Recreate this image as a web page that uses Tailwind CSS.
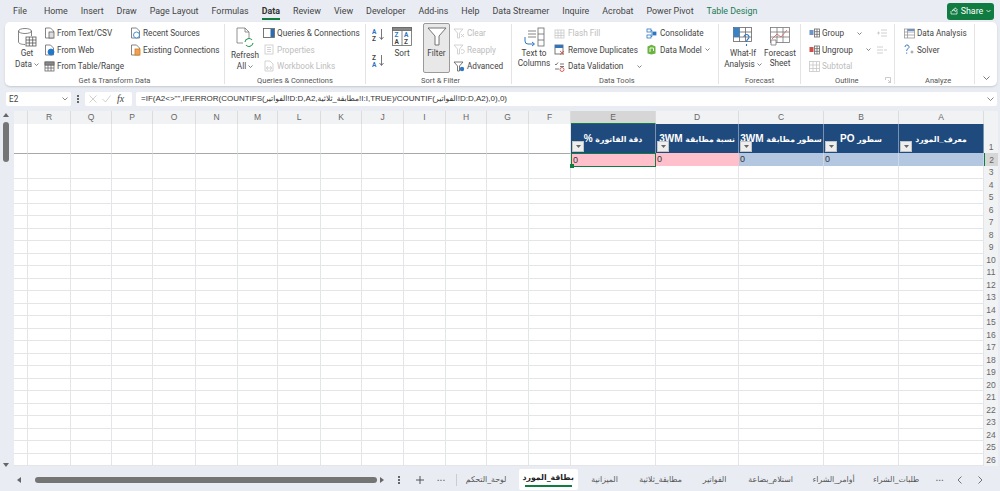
<!DOCTYPE html>
<html lang="en">
<head>
<meta charset="UTF-8">
<title>Excel - Data</title>
<script src="https://cdn.jsdelivr.net/npm/@tailwindcss/browser@4"></script>
</head>
<body class="w-[1000px] h-[491px] overflow-hidden bg-[#e9edf3] font-['Roboto','DejaVu_Sans',sans-serif] text-[#444] text-[8.2px] leading-none whitespace-nowrap">

<!-- menu tabs -->
<div class="h-[22px] flex items-center pl-[13px] pr-[6px] text-[8.900px] text-[#444]">
  <div class="flex gap-[13px] items-center">
    <span class="mr-[4px]">File</span><span>Home</span><span>Insert</span><span>Draw</span><span>Page Layout</span><span>Formulas</span>
    <span class="relative font-bold text-[#333]">Data<span class="absolute left-0 right-0 top-[11px] h-[2px] bg-[#107c41]"></span></span>
    <span>Review</span><span>View</span><span>Developer</span><span>Add-ins</span><span>Help</span><span>Data Streamer</span><span>Inquire</span><span>Acrobat</span><span>Power Pivot</span><span class="text-[#1d7a55]">Table Design</span>
  </div>
  <div class="ml-auto h-[17px] w-[47px] bg-[#107c41] rounded-[3px] text-white flex items-center justify-center gap-[3px]">
    <svg width="8" height="8" viewBox="0 0 8 8" fill="none" stroke="#fff" stroke-width=".7"><path d="M1 4v3h6V4M2 4a3 3 0 0 1 3-2V.8L7.5 2.8 5 4.6V3.4A3 3 0 0 0 2 4z"/></svg>
    <span>Share</span>
    <svg width="5" height="4" viewBox="0 0 5 4" fill="none" stroke="#fff" stroke-width=".8"><path d="M.5 1l2 2 2-2"/></svg>
  </div>
</div>

<!-- ribbon -->
<div class="mx-[3px] ml-[5px] h-[64px] bg-white rounded-[5px] shadow-[0_1px_2px_rgba(0,0,0,.15)] flex">

  <!-- Get & Transform -->
  <div class="w-[220px] flex flex-col border-r border-[#e4e4e4] my-[2px]">
    <div class="flex-1 flex">
      <div class="w-[28px] ml-[8px] mr-[3px] flex flex-col items-center">
        <svg width="20" height="21" viewBox="0 0 20 21" class="mt-[3px]" fill="none" stroke="#666" stroke-width=".8"><ellipse cx="8" cy="4" rx="6.5" ry="2.5" fill="#fff"/><path d="M1.5 4v11c0 1.4 2.8 2.5 6.5 2.5" /><path d="M14.500 4v5"/><rect x="9" y="10" width="10" height="9" fill="#fff" stroke="#555"/><path d="M9 13h10M9 16h10M12.300 10v9M15.700 10v9" stroke="#555"/></svg>
        <span class="mt-[1px] h-[10px]">Get</span>
        <span class="flex items-center gap-[2px] h-[10px]">Data <svg width="5" height="3" viewBox="0 0 5 3" fill="none" stroke="#555" stroke-width=".7"><path d="M.5.500l2 2 2-2"/></svg></span>
      </div>
      <div class="w-[86px] flex flex-col pt-[1px]">
        <div class="h-[16.500px] flex items-center gap-[2px]"><svg width="11" height="12" viewBox="0 0 11 12" fill="none" stroke="#666" stroke-width=".8"><path d="M1.500 1h5l3 3v7h-8z"/><rect x="5" y="5" width="5" height="6" fill="#ddd"/></svg>From Text/CSV</div>
        <div class="h-[16.500px] flex items-center gap-[2px]"><svg width="11" height="12" viewBox="0 0 11 12" fill="none" stroke="#666" stroke-width=".8"><path d="M1.500 1h5l3 3v7h-8z"/><circle cx="7" cy="8" r="3" fill="#1f78c8" stroke="#1f78c8"/></svg>From Web</div>
        <div class="h-[16.500px] flex items-center gap-[2px]"><svg width="11" height="11" viewBox="0 0 11 11" fill="none" stroke="#666" stroke-width=".8"><rect x="1" y="1" width="9" height="9"/><path d="M1 4h9M1 7h9M4 1v9M7 1v9"/><rect x="1" y="1" width="9" height="3" fill="#888"/></svg>From Table/Range</div>
      </div>
      <div class="flex flex-col pt-[1px]">
        <div class="h-[16.500px] flex items-center gap-[2px]"><svg width="11" height="12" viewBox="0 0 11 12" fill="none" stroke="#666" stroke-width=".8"><path d="M1.500 1h5l3 3v7h-8z"/><circle cx="6.500" cy="8" r="3" fill="#fff" stroke="#1f78c8"/></svg>Recent Sources</div>
        <div class="h-[16.500px] flex items-center gap-[2px]"><svg width="11" height="12" viewBox="0 0 11 12" fill="none" stroke="#666" stroke-width=".8"><path d="M1.500 1h5l3 3v7h-8z"/><rect x="5" y="5" width="5" height="6" fill="#f0a050" stroke="#d07a20"/></svg>Existing Connections</div>
      </div>
    </div>
    <div class="h-[7px] text-center text-[7.500px] text-[#555]">Get &amp; Transform Data</div>
  </div>

  <!-- Queries -->
  <div class="w-[141px] flex flex-col border-r border-[#e4e4e4] my-[2px]">
    <div class="flex-1 flex">
      <div class="w-[32px] ml-[4px] flex flex-col items-center">
        <svg width="20" height="21" viewBox="0 0 20 21" class="mt-[3px]" fill="none" stroke="#777" stroke-width=".8"><path d="M2 1h8l4 4v7M2 1v15h6"/><path d="M10 1v4h4"/><path d="M10 15a4 4 0 0 1 7-2M18 16a4 4 0 0 1-7 2" stroke="#2d9a5a" stroke-width="1.100"/></svg>
        <span class="mt-[3px] h-[10px]">Refresh</span>
        <span class="flex items-center gap-[2px] h-[10px]">All <svg width="5" height="3" viewBox="0 0 5 3" fill="none" stroke="#555" stroke-width=".7"><path d="M.5.500l2 2 2-2"/></svg></span>
      </div>
      <div class="ml-[2px] flex flex-col pt-[1px]">
        <div class="h-[16.500px] flex items-center gap-[2px]"><svg width="12" height="10" viewBox="0 0 12 10" fill="none" stroke="#555" stroke-width=".8"><rect x=".5" y=".5" width="11" height="9"/><rect x="7.500" y="1" width="3.500" height="8" fill="#2b6cb0" stroke="none"/></svg>Queries &amp; Connections</div>
        <div class="h-[16.500px] flex items-center gap-[2px] text-[#bdbdbd]"><svg width="12" height="11" viewBox="0 0 12 11" fill="none" stroke="#c8c8c8" stroke-width=".8"><rect x="2" y="1" width="8" height="9"/><path d="M4 3.500h4M4 5.500h4M4 7.500h4"/></svg>Properties</div>
        <div class="h-[16.500px] flex items-center gap-[2px] text-[#bdbdbd]"><svg width="12" height="12" viewBox="0 0 12 12" fill="none" stroke="#c8c8c8" stroke-width=".8"><path d="M2 1h5l3 3v7H2z"/><path d="M4 8h4M5 6.500a1.500 1.500 0 0 0 0 3M7 6.500a1.500 1.500 0 0 1 0 3"/></svg>Workbook Links</div>
      </div>
    </div>
    <div class="h-[7px] text-center text-[7.500px] text-[#555]">Queries &amp; Connections</div>
  </div>

  <!-- Sort & Filter -->
  <div class="w-[146px] flex flex-col border-r border-[#e4e4e4] my-[2px]">
    <div class="flex-1 flex">
      <div class="ml-[6px] w-[14px] flex flex-col gap-[13px] pt-[4px]">
        <svg width="13" height="13" viewBox="0 0 13 13"><text x="0" y="6" font-size="6.500" font-weight="700" fill="#2f76c0">A</text><text x="0" y="12.500" font-size="6.500" font-weight="700" fill="#444">Z</text><path d="M9.500 1v10M7.500 9l2 2.500 2-2.500" fill="none" stroke="#555" stroke-width=".8"/></svg>
        <svg width="13" height="13" viewBox="0 0 13 13"><text x="0" y="6" font-size="6.500" font-weight="700" fill="#444">Z</text><text x="0" y="12.500" font-size="6.500" font-weight="700" fill="#2f76c0">A</text><path d="M9.500 1v10M7.500 9l2 2.500 2-2.500" fill="none" stroke="#555" stroke-width=".8"/></svg>
      </div>
      <div class="w-[20px] ml-[6px] flex flex-col items-center">
        <svg width="20" height="19" viewBox="0 0 20 19" class="mt-[3px]" fill="none" stroke="#666" stroke-width=".8"><rect x=".5" y=".5" width="19" height="18"/><rect x=".5" y=".5" width="19" height="3" fill="#888"/><path d="M10 3.500v15"/><text x="2.500" y="10" font-size="6.500" fill="#2f76c0" stroke="none" font-weight="700">Z</text><text x="2.500" y="17" font-size="6.500" fill="#444" stroke="none" font-weight="700">A</text><text x="12" y="10" font-size="6.500" fill="#2f76c0" stroke="none" font-weight="700">A</text><text x="12" y="17" font-size="6.500" fill="#444" stroke="none" font-weight="700">Z</text></svg>
        <span class="mt-[3px]">Sort</span>
      </div>
      <div class="ml-[11px] -mt-[1px] w-[27px] h-[50px] bg-[#e8e8e8] border border-[#9a9a9a] rounded-[2px] flex flex-col items-center">
        <svg width="20" height="19" viewBox="0 0 20 19" class="mt-[3px]" fill="#fff" stroke="#666" stroke-width=".9"><path d="M1 1h18l-7 8v9h-4V9z"/></svg>
        <span class="mt-[3px]">Filter</span>
      </div>
      <div class="ml-[3px] flex flex-col pt-[1px]">
        <div class="h-[16.500px] flex items-center gap-[2px] text-[#bdbdbd]"><svg width="12" height="11" viewBox="0 0 12 11" fill="none" stroke="#c8c8c8" stroke-width=".8"><path d="M1 1h9L6.500 5v5h-2V5zM8 6l3 3M11 6L8 9"/></svg>Clear</div>
        <div class="h-[16.500px] flex items-center gap-[2px] text-[#bdbdbd]"><svg width="12" height="11" viewBox="0 0 12 11" fill="none" stroke="#c8c8c8" stroke-width=".8"><path d="M1 1h9L6.500 5v5h-2V5zM8 6a2 2 0 1 1 0 3"/></svg>Reapply</div>
        <div class="h-[16.500px] flex items-center gap-[2px]"><svg width="12" height="11" viewBox="0 0 12 11" fill="none" stroke="#555" stroke-width=".8"><path d="M1 1h9L6.500 5v5h-2V5z"/><circle cx="9" cy="8" r="2.200" fill="#2f76c0" stroke="none"/></svg>Advanced</div>
      </div>
    </div>
    <div class="h-[7px] text-[7.500px] text-[#555] pl-[55px]">Sort &amp; Filter</div>
  </div>

  <!-- Data Tools -->
  <div class="w-[207px] flex flex-col border-r border-[#e4e4e4] my-[2px]">
    <div class="flex-1 flex">
      <div class="w-[28px] ml-[8px] flex flex-col items-center">
        <svg width="24" height="21" viewBox="0 0 24 21" class="mt-[3px]" fill="none" stroke="#666" stroke-width=".8"><path d="M6 4h8M6 7h8M6 10h8"/><rect x="16" y="1" width="6" height="18"/><path d="M16 7h6M16 13h6"/><path d="M3 10v4a3 3 0 0 0 3 3h6M10 15l2.500 2L10 19" stroke="#2f76c0" stroke-width="1"/></svg>
        <span class="mt-[1px] h-[10px]">Text to</span>
        <span class="h-[10px]">Columns</span>
      </div>
      <div class="w-[92px] ml-[6px] flex flex-col pt-[1px]">
        <div class="h-[16.500px] flex items-center gap-[3px] text-[#bdbdbd]"><svg width="11" height="11" viewBox="0 0 11 11" fill="none" stroke="#c8c8c8" stroke-width=".8"><rect x="1" y="2" width="9" height="8"/><path d="M1 5h9M1 7.500h9M4 2v8M7 2v8"/></svg>Flash Fill</div>
        <div class="h-[16.500px] flex items-center gap-[3px]"><svg width="11" height="11" viewBox="0 0 11 11" fill="none" stroke="#555" stroke-width=".8"><rect x="1" y="1" width="8" height="9"/><rect x="1" y="1" width="8" height="3" fill="#2f76c0" stroke="none"/><path d="M6 7l4 3.500M10 7l-4 3.500" stroke="#d0403a"/></svg>Remove Duplicates</div>
        <div class="h-[16.500px] flex items-center gap-[3px]"><svg width="11" height="11" viewBox="0 0 11 11" fill="none" stroke="#555" stroke-width=".8"><path d="M1 3l1 1 2-2.500M6 3h4M1 8h4"/><path d="M6 5.500h4" /><circle cx="8" cy="8.500" r="2" stroke="#d0403a"/></svg>Data Validation<svg class="ml-[11px]" width="5" height="3" viewBox="0 0 5 3" fill="none" stroke="#555" stroke-width=".7"><path d="M.5.500l2 2 2-2"/></svg></div>
      </div>
      <div class="flex flex-col pt-[1px]">
        <div class="h-[16.500px] flex items-center gap-[3px]"><svg width="11" height="11" viewBox="0 0 11 11" fill="none" stroke="#2f76c0" stroke-width=".8"><rect x="1" y="1" width="4" height="3"/><rect x="1" y="7" width="4" height="3"/><rect x="7" y="4" width="3" height="3" fill="#2f76c0"/><path d="M5 2.500h1v6H5"/></svg>Consolidate</div>
        <div class="h-[16.500px] flex items-center gap-[3px]"><svg width="11" height="11" viewBox="0 0 11 11"><path d="M1.500 2.500L5.500 .8l4 1.700v7l-4 1-4-1z" fill="#6bb33f"/><path d="M4 8V4h3.500v3" fill="none" stroke="#fff" stroke-width=".9"/></svg>Data Model <svg width="5" height="3" viewBox="0 0 5 3" fill="none" stroke="#555" stroke-width=".7"><path d="M.5.500l2 2 2-2"/></svg></div>
      </div>
    </div>
    <div class="h-[7px] text-[7.500px] text-[#555] pl-[87px]">Data Tools</div>
  </div>

  <!-- Forecast -->
  <div class="w-[82px] flex flex-col border-r border-[#e4e4e4] my-[2px]">
    <div class="flex-1 flex">
      <div class="w-[36px] ml-[6px] flex flex-col items-center">
        <svg width="20" height="20" viewBox="0 0 20 20" class="mt-[3px]" fill="none" stroke="#666" stroke-width=".8"><rect x=".5" y=".5" width="18" height="14"/><path d="M.5 5h18M.5 10h18M6.500 .5v14M12.500 .5v14"/><rect x=".5" y=".5" width="6" height="9.500" fill="#3b82c4" stroke="none"/><path d="M11 10a2.500 2.500 0 1 1 4 2c-1 .8-1.500 1.500-1.500 3M13.500 17v2" stroke="#2f76c0" stroke-width="1.100"/></svg>
        <span class="mt-[2px] h-[10px]">What-If</span>
        <span class="flex items-center gap-[2px] h-[10px]">Analysis <svg width="5" height="3" viewBox="0 0 5 3" fill="none" stroke="#555" stroke-width=".7"><path d="M.5.500l2 2 2-2"/></svg></span>
      </div>
      <div class="w-[36px] ml-[1px] flex flex-col items-center">
        <svg width="20" height="20" viewBox="0 0 20 20" class="mt-[3px]" fill="none" stroke="#777" stroke-width=".8"><rect x=".5" y=".5" width="19" height="15"/><path d="M.5 5h19M.5 10h19M7 .5v15M13 .5v15"/><path d="M2 12l5-5 4 3 6-7" stroke="#d0605a"/><path d="M1 13h5v5H1z" fill="#fff"/></svg>
        <span class="mt-[2px] h-[10px]">Forecast</span>
        <span class="h-[10px]">Sheet</span>
      </div>
    </div>
    <div class="h-[7px] text-[7.500px] text-[#555] pl-[26px]">Forecast</div>
  </div>

  <!-- Outline -->
  <div class="w-[94px] flex flex-col border-r border-[#e4e4e4] my-[2px]">
    <div class="flex-1 flex">
      <div class="w-[68px] ml-[8px] flex flex-col pt-[1px]">
        <div class="h-[16.500px] flex items-center gap-[2px]"><svg width="11" height="10" viewBox="0 0 11 10" fill="none" stroke="#666" stroke-width=".8"><rect x="5.500" y="1" width="5" height="8"/><path d="M5.500 3.700h5M5.500 6.300h5M8 1v8"/><rect x=".5" y="2" width="4" height="5" fill="#6d94c4" stroke="none"/></svg>Group<svg class="ml-[11px]" width="5" height="3" viewBox="0 0 5 3" fill="none" stroke="#555" stroke-width=".7"><path d="M.5.500l2 2 2-2"/></svg></div>
        <div class="h-[16.500px] flex items-center gap-[2px]"><svg width="11" height="10" viewBox="0 0 11 10" fill="none" stroke="#666" stroke-width=".8"><rect x="5.500" y="1" width="5" height="8"/><path d="M5.500 3.700h5M5.500 6.300h5M8 1v8"/><rect x=".5" y="2" width="4" height="5" fill="#d0504a" stroke="none"/></svg>Ungroup<svg class="ml-[11px]" width="5" height="3" viewBox="0 0 5 3" fill="none" stroke="#555" stroke-width=".7"><path d="M.5.500l2 2 2-2"/></svg></div>
        <div class="h-[16.500px] flex items-center gap-[2px] text-[#bdbdbd]"><svg width="11" height="11" viewBox="0 0 11 11" fill="none" stroke="#c8c8c8" stroke-width=".8"><rect x=".5" y=".5" width="10" height="10"/><path d="M.5 4h10M.5 7.500h10M4 .5v10M7.500 .5v10"/></svg>Subtotal</div>
      </div>
      <div class="flex flex-col pt-[1px]">
        <div class="h-[16.500px] flex items-center"><svg width="10" height="8" viewBox="0 0 10 8" fill="none" stroke="#c4c4c4" stroke-width=".8"><path d="M4 1h6M4 4h6M4 7h6M0 4h3M1.500 2.500v3"/></svg></div>
        <div class="h-[16.500px] flex items-center"><svg width="10" height="8" viewBox="0 0 10 8" fill="none" stroke="#c4c4c4" stroke-width=".8"><path d="M0 1h6M0 4h6M0 7h6M7 4h3"/></svg></div>
      </div>
    </div>
    <div class="h-[7px] flex text-[7.500px] text-[#555] pl-[34px] pr-[3px] items-start justify-between">Outline
      <svg width="6" height="6" viewBox="0 0 6 6" fill="none" stroke="#aaa" stroke-width=".6"><path d="M.5 3V.5h5v5H3M3 3l2.500 2.500"/></svg>
    </div>
  </div>

  <!-- Analyze -->
  <div class="w-[80px] flex flex-col border-r border-[#e4e4e4] my-[2px]">
    <div class="flex-1 ml-[9px] flex flex-col pt-[1px]">
      <div class="h-[16.500px] flex items-center gap-[2px]"><svg width="11" height="11" viewBox="0 0 11 11" fill="none" stroke="#999" stroke-width=".8"><rect x=".5" y="1" width="10" height="9"/><path d="M3.500 1v9M.5 4h10M.5 7h10"/><rect x="3.500" y="1" width="7" height="2" fill="#6d94c4" stroke="none"/></svg>Data Analysis</div>
      <div class="h-[16.500px] flex items-center gap-[2px]"><svg width="11" height="11" viewBox="0 0 11 11" fill="none" stroke="#2f76c0" stroke-width="1"><path d="M1 3a2 2 0 1 1 3 1.700C3 5.300 2.700 6 2.700 7M2.700 8.500v1.200"/><path d="M6.500 8h3M8 6.500v3" stroke="#777" stroke-width=".7"/></svg>Solver</div>
    </div>
    <div class="h-[7px] text-[7.500px] text-[#555] pl-[30px]">Analyze</div>
  </div>
  <div class="flex-1 flex items-end justify-center pb-[6px]"><svg width="7" height="4" viewBox="0 0 7 4" fill="none" stroke="#555" stroke-width=".8"><path d="M.5.500l3 3 3-3"/></svg></div>
</div>

<!-- formula bar -->
<div class="h-[14px] mt-[6px] mx-[3px] ml-[6px] flex items-stretch">
  <div class="w-[65px] bg-white rounded-[2px] flex items-center justify-between pl-[3px] pr-[3px]"><span>E2</span><svg width="6" height="4" viewBox="0 0 6 4" fill="none" stroke="#555" stroke-width=".7"><path d="M.5.500l2.500 2.500L5.500.5"/></svg></div>
  <div class="w-[14px] flex items-center justify-center"><svg width="2" height="8" viewBox="0 0 2 8" fill="#666"><rect width="2" height="2"/><rect y="3" width="2" height="2"/><rect y="6" width="2" height="2"/></svg></div>
  <div class="w-[47px] bg-white rounded-[2px] flex items-center pl-[4px] gap-[5px]">
    <svg width="8" height="8" viewBox="0 0 8 8" fill="none" stroke="#bbb" stroke-width=".7"><path d="M.5.500l7 7M7.500.5l-7 7"/></svg>
    <svg width="9" height="8" viewBox="0 0 9 8" fill="none" stroke="#bbb" stroke-width=".7"><path d="M.5 4l3 3 5-6.500"/></svg>
    <span class="font-['Liberation_Serif',serif] italic text-[10px] text-[#444] ml-[1px]">fx</span>
  </div>
  <div class="ml-[4px] flex-1 bg-white rounded-[2px] flex items-center pl-[5px] pr-[3px]">
    <span class="font-['Liberation_Sans','DejaVu_Sans',sans-serif] text-[8px] text-[#333]">=IF(A2&lt;&gt;"",IFERROR(COUNTIFS(<span class="text-[7.500px]">الفواتير</span>!D:D,A2,<span class="text-[7.500px]">مطابقة_ثلاثية</span>!I:I,TRUE)/COUNTIF(<span class="text-[7.500px]">الفواتير</span>!D:D,A2),0),0)</span>
    <svg class="ml-auto" width="7" height="4" viewBox="0 0 7 4" fill="none" stroke="#555" stroke-width=".7"><path d="M.5.500l3 3 3-3"/></svg>
  </div>
</div>

<!-- sheet -->
<div class="mt-[5px] h-[357px] flex">
  <div class="w-[14px] flex flex-col items-center pt-[1px] pr-[2px]">
    <svg width="6" height="4" viewBox="0 0 6 4" fill="#666" class="mt-[1px]"><path d="M3 0l3 4H0z"/></svg>
    <div class="w-[6px] h-[40px] mt-[5px] bg-[#757575] rounded-[3px]"></div>
    <svg width="6" height="4" viewBox="0 0 6 4" fill="#666" class="mt-auto mb-[1px]"><path d="M3 4L0 0h6z"/></svg>
  </div>
  <div id="sheet" class="flex-1 flex flex-col font-['Liberation_Sans','DejaVu_Sans',sans-serif] overflow-hidden"></div>
</div>

<!-- sheet tabs -->
<div class="h-[23px] flex items-center pl-[17px] pr-[14px] text-[#555]">
  <svg width="4" height="6" viewBox="0 0 4 6" fill="#666"><path d="M0 3l4-3v6z"/></svg>
  <div class="w-[342px] ml-[14px] h-[6px] bg-[#757575] rounded-[3px]"></div>
  <svg class="ml-[3px]" width="4" height="6" viewBox="0 0 4 6" fill="#666"><path d="M4 3L0 0v6z"/></svg>
  <svg class="ml-[14px]" width="2" height="8" viewBox="0 0 2 8" fill="#666"><rect width="2" height="2"/><rect y="3" width="2" height="2"/><rect y="6" width="2" height="2"/></svg>
  <svg class="ml-[16px]" width="8" height="8" viewBox="0 0 8 8" stroke="#555" stroke-width="1"><path d="M4 0v8M0 4h8"/></svg>
  <span class="ml-[13px] tracking-[.5px] font-bold text-[#666] -mt-[3px]">...</span>
  <span class="ml-[10px] w-px h-[12px] bg-[#ccc]"></span>
  <div dir="rtl" class="flex flex-row-reverse items-center font-['DejaVu_Sans',sans-serif] text-[7.800px]">
    <span class="ml-[7px] w-[45px] text-center">لوحة_التحكم</span>
    <span class="ml-[10px] w-[59px] h-[21px] leading-[18px] text-center bg-white rounded-[2px] font-bold text-[#222] relative">بطاقة_المورد<span class="absolute left-[6px] right-[6px] bottom-[3px] h-[2px] bg-[#107c41]"></span></span>
    <span class="ml-[13px] w-[28px] text-center">الميزانية</span>
    <span class="ml-[17px] w-[50px] text-center">مطابقة_ثلاثية</span>
    <span class="ml-[16px] w-[26px] text-center">الفواتير</span>
    <span class="ml-[18px] w-[50px] text-center">استلام_بضاعة</span>
    <span class="ml-[16px] w-[44px] text-center">أوامر_الشراء</span>
    <span class="ml-[16px] w-[49px] text-center">طلبات_الشراء</span>
  </div>
  <span class="ml-[15px] tracking-[.5px] font-bold text-[#666] -mt-[3px]">...</span>
  <svg class="ml-[13px]" width="5" height="8" viewBox="0 0 5 8" fill="none" stroke="#555" stroke-width=".8"><path d="M4.500.5L1 4l3.500 3.500"/></svg>
  <svg class="ml-[16px]" width="5" height="8" viewBox="0 0 5 8" fill="none" stroke="#555" stroke-width=".8"><path d="M.5.500L4 4 .5 7.500"/></svg>
</div>

<script>
  const COLS = ['', 'R', 'Q', 'P', 'O', 'N', 'M', 'L', 'K', 'J', 'I', 'H', 'G', 'F', 'E', 'D', 'C', 'B', 'A'];
  const template = 'grid grid-cols-[14px_43px_41px_41px_43px_42px_40px_43px_41px_42px_42px_41px_42px_42px_85px_83px_85px_75px_85px_14px_1fr]';
  const ar = t => `<span class="text-[7.800px]">${t}</span>`;
  const HEADERS = {
    E: ar('دقة الفاتورة') + ' %',
    D: ar('نسبة مطابقة') + ' 3WM',
    C: ar('سطور مطابقة') + ' 3WM',
    B: ar('سطور') + ' PO',
    A: ar('معرف_المورد')
  };
  const sheet = document.getElementById('sheet');

  const filterBtn = '<span class="absolute left-[1px] bottom-[1px] w-[12px] h-[11px] bg-[#eeeeee] border border-[#c4c4c4] flex items-center justify-center"><svg width="5" height="3" viewBox="0 0 5 3" fill="#666"><path d="M0 0h5L2.500 3z"/></svg></span>';

  let html = `<div class="${template} h-[13px] text-[#666] text-[8.500px]">`;
  COLS.forEach(c => {
    html += `<div class="flex items-center justify-center border-r border-[#dcdcdc] ${c === 'E' ? 'bg-[#d6d6d6] border-b border-b-[#107c41]' : 'bg-[#f1f2f4]'}">${c}</div>`;
  });
  html += '<div class="bg-[#f1f2f4]"></div><div></div></div>';

  // row 1 : table head
  html += `<div class="${template} h-[29px]">`;
  COLS.forEach(c => {
    if (HEADERS[c]) {
      html += `<div dir="rtl" class="relative bg-[#1f4a7d] border-r border-white/40 text-white font-bold text-[10px] overflow-hidden text-center pt-[10px]">${HEADERS[c]}${filterBtn}</div>`;
    } else {
      html += '<div class="bg-white border-r border-[#e3e5e7]"></div>';
    }
  });
  html += '<div class="bg-[#f1f2f4] text-[#666] text-[8.500px] flex items-end justify-center pb-[2px]">1</div><div></div></div>';

  // row 2 and the empty rows
  for (let r = 2; r <= 26; r++) {
    const h = r === 2 ? 'h-[13px]' : 'h-[12.500px]';
    html += `<div class="${template} ${h}">`;
    COLS.forEach(c => {
      let cls = 'bg-white border-r border-b border-[#e3e5e7]';
      let txt = '';
      if (r === 2) {
        if (c === 'E') { cls = 'relative bg-[#ffc0cb] border border-[#107c41]'; txt = '0<span class="absolute -left-[2px] -bottom-[2px] w-[4px] h-[4px] bg-[#107c41]"></span>'; }
        if (c === 'D') { cls = 'bg-[#ffc0cb]'; txt = '0'; }
        if (c === 'C' || c === 'B' || c === 'A') { cls = 'bg-[#b4c7e1] border-r border-white/30'; txt = c === 'A' ? '' : '0'; }
        if (!'EDCBA'.includes(c) || c === '') cls = 'bg-white border-r border-[#e3e5e7] border-t border-t-[#a8a8a8] border-b border-b-[#e3e5e7]';
      }
      html += `<div class="${cls} pl-[1px] text-[9px] leading-[12px] text-[#333]">${txt}</div>`;
    });
    html += `<div class="${r === 2 ? 'bg-[#d6d6d6] border-l border-l-[#107c41]' : 'bg-[#f1f2f4]'} text-[#666] text-[8.500px] flex items-center justify-center">${r}</div><div></div></div>`;
  }
  sheet.innerHTML = html;
</script>
</body>
</html>
